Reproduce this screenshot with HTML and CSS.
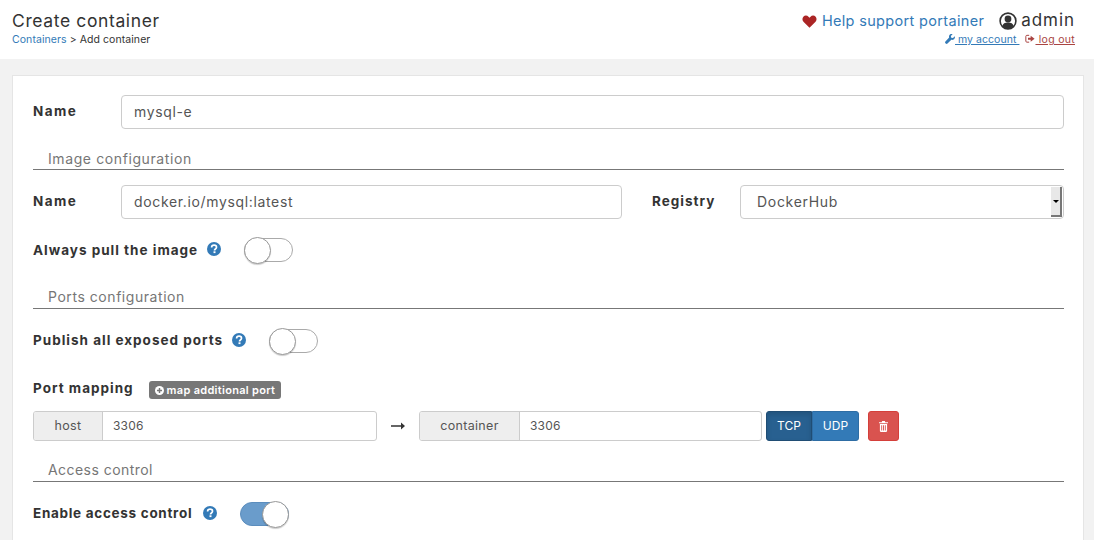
FILE: index.html
```html
<!DOCTYPE html>
<html lang="en">
<head>
<meta charset="utf-8">
<title>Create container</title>
<link rel="stylesheet" href="styles.css">
</head>
<body>
<header class="topbar">
  <div class="crumbs">
    <div class="title">Create container</div>
    <div class="path"><a class="blue">Containers</a> &gt; Add container</div>
  </div>
  <div class="account">
    <div class="account-main">
      <svg class="ic-heart" viewBox="0 0 24 22"><path d="M12 21.5 2.2 11.7C-.6 8.9-.5 5 1.6 2.8 4 .4 8 .5 10.3 2.8L12 4.5l1.7-1.700C16 .5 20 .4 22.4 2.8c2.1 2.2 2.2 6.1-.6 8.900z"/></svg>
      <a class="support">Help support portainer</a>
      <svg class="ic-user" viewBox="0 0 18 18"><circle cx="9" cy="9" r="7.900" fill="#fff" stroke="#333" stroke-width="1.600"/><circle cx="9" cy="7" r="3.400" fill="#333"/><path d="M3.400 14.200c.5-2.600 2.500-3.700 5.600-3.700s5.100 1.100 5.600 3.700A7.500 7.500 0 0 1 9 16.600a7.500 7.500 0 0 1-5.600-2.400z" fill="#333"/></svg>
      <span class="admin">admin</span>
    </div>
    <div class="account-links">
      <a class="link-blue"><svg class="ic-small" viewBox="0 0 12 12"><path fill="#337ab7" d="M11.700 2.800 9.600 4.900 7.500 4.400 7 2.300 9.100.3C7.600-.3 5.900.3 5.200 1.600c-.5.900-.5 1.900-.2 2.700L.5 8.900c-.6.600-.6 1.500 0 2.100l.400.400c.6.600 1.500.6 2.100 0l4.600-4.500c.8.300 1.800.3 2.700-.2 1.300-.8 2-2.400 1.400-3.900z"/></svg> my account&nbsp;</a>
      <a class="link-red"><svg class="ic-small" viewBox="0 0 12 12"><path fill="none" stroke="#a94442" stroke-width="1.200" d="M5 1.600H2.200C1.500 1.600 1 2.100 1 2.800v5.800c0 .7.500 1.200 1.200 1.200H5"/><path fill="#a94442" d="M3.600 4.400h3.200V2.200L11.500 5.700 6.800 9.200V7H3.600z"/></svg> log out</a>
    </div>
  </div>
</header>

<main class="page">
  <section class="card">
    <div class="row">
      <label class="label label-name">Name</label>
      <div class="input grow">mysql-e</div>
    </div>

    <div class="section section-image">Image configuration</div>
    <div class="row row-image">
      <label class="label label-name">Name</label>
      <div class="input image-input">docker.io/mysql:latest</div>
      <label class="label label-registry">Registry</label>
      <div class="select">
        <span class="select-value">DockerHub</span>
        <span class="select-btn"><i class="caret"></i></span>
      </div>
    </div>

    <div class="row row-toggle row-pull">
      <label class="label">Always pull the image</label>
      <svg class="ic-help" viewBox="0 0 14 14"><circle cx="7" cy="7" r="7" fill="#337ab7"/><path d="M4.600 5.400c0-1.400 1-2.200 2.500-2.200 1.400 0 2.400.8 2.400 2 0 1.800-2 1.700-2 3.200" fill="none" stroke="#fff" stroke-width="1.700"/><rect x="6.500" y="9.300" width="2" height="1.800" fill="#fff"/></svg>
      <span class="toggle"><span class="knob"></span></span>
    </div>

    <div class="section section-ports">Ports configuration</div>
    <div class="row row-toggle row-publish">
      <label class="label">Publish all exposed ports</label>
      <svg class="ic-help" viewBox="0 0 14 14"><circle cx="7" cy="7" r="7" fill="#337ab7"/><path d="M4.600 5.400c0-1.400 1-2.200 2.500-2.200 1.400 0 2.400.8 2.400 2 0 1.800-2 1.700-2 3.200" fill="none" stroke="#fff" stroke-width="1.700"/><rect x="6.500" y="9.300" width="2" height="1.800" fill="#fff"/></svg>
      <span class="toggle"><span class="knob"></span></span>
    </div>

    <div class="row row-mapping">
      <label class="label">Port mapping</label>
      <span class="badge"><svg class="ic-plus" viewBox="0 0 10 10"><circle cx="5" cy="5" r="5" fill="#fff"/><path d="M5 2.200v5.600M2.200 5h5.600" stroke="#777" stroke-width="1.600"/></svg>map additional port</span>
    </div>

    <div class="row row-ports">
      <div class="group group-host">
        <span class="addon addon-host">host</span>
        <span class="group-input">3306</span>
      </div>
      <svg class="ic-arrow" viewBox="0 0 14 8"><path d="M0 3.200h10V.5L14 4l-4 3.500V4.800H0z" fill="#333"/></svg>
      <div class="group group-container">
        <span class="addon addon-container">container</span>
        <span class="group-input">3306</span>
      </div>
      <div class="switch">
        <span class="sw sw-on">TCP</span>
        <span class="sw">UDP</span>
      </div>
      <span class="btn-danger"><svg class="ic-trash" viewBox="0 0 10 12"><path fill="#fff" d="M3.500 0h3l.5 1.300H10v1.100H0V1.300h3zM1 3.200h8v7.600c0 .7-.4 1.200-1 1.200H2c-.6 0-1-.5-1-1.200zm1.500 1.300v6h1v-6zm2 0v6h1v-6zm2 0v6h1v-6z"/></svg></span>
    </div>

    <div class="section section-access">Access control</div>
    <div class="row row-toggle row-access">
      <label class="label">Enable access control</label>
      <svg class="ic-help" viewBox="0 0 14 14"><circle cx="7" cy="7" r="7" fill="#337ab7"/><path d="M4.600 5.400c0-1.400 1-2.200 2.500-2.200 1.400 0 2.400.8 2.400 2 0 1.800-2 1.700-2 3.200" fill="none" stroke="#fff" stroke-width="1.700"/><rect x="6.500" y="9.300" width="2" height="1.800" fill="#fff"/></svg>
      <span class="toggle toggle-on"><span class="knob"></span></span>
    </div>
  </section>
</main>
</body>
</html>
```
FILE: styles.css
```css
* { box-sizing: border-box; }
html, body { margin: 0; height: 540px; overflow: hidden; }
body {
  background: #f2f2f2;
  color: #333;
  font-family: Inter, "Liberation Sans", sans-serif;
  font-size: 14px;
}
a { text-decoration: none; }
.blue { color: #337ab7; }

.topbar {
  height: 59px;
  background: #fff;
  display: flex;
  justify-content: space-between;
  padding: 0 19px 0 12px;
}
.title { font-size: 17.500px; line-height: 20px; margin-top: 11px; letter-spacing: .62px; color: #333; }
.path { font-size: 10.500px; line-height: 13px; margin-top: 2px; color: #333; letter-spacing: .07px; }
.account { display: flex; flex-direction: column; align-items: flex-end; }
.account-main { display: flex; align-items: center; margin-top: 11px; height: 20px; }
.ic-heart { width: 15px; height: 13px; fill: #ab2525; margin-right: 5px; }
.support { color: #337ab7; font-size: 14.500px; letter-spacing: .33px; padding-bottom: 2px; }
.ic-user { width: 18px; height: 18px; margin-left: 15px; margin-right: 4px; }
.admin { font-size: 17px; letter-spacing: .95px; color: #333; padding-bottom: 2px; }
.account-links { display: flex; gap: 6px; font-size: 10.500px; line-height: 13px; margin-top: 2px; letter-spacing: .3px; }
.link-blue { color: #337ab7; text-decoration: underline; letter-spacing: .05px; }
.link-red { color: #a94442; text-decoration: underline; }
.ic-small { width: 10px; height: 10px; vertical-align: -1px; }

.page { padding: 16px 10px 0 12px; }
.card {
  background: #fff;
  border: 1px solid #e5e5e5;
  border-bottom: 0;
  height: 465px;
  padding: 19px 19px 0 20px;
}
.row { display: flex; align-items: center; }
.label { font-weight: 700; font-size: 13.500px; letter-spacing: 1px; color: #333; white-space: nowrap; padding-bottom: 2px; }
.label-name { width: 88px; flex: none; letter-spacing: 1.400px; }
.row-pull .label { padding-bottom: 0; }
.row-access .label { letter-spacing: .7px; }
.input {
  height: 34px;
  border: 1px solid #ccc;
  border-radius: 4px;
  padding: 0 12px 2px;
  display: flex;
  align-items: center;
  color: #555;
  font-size: 14px;
  letter-spacing: .65px;
}
.grow { flex: 1; }
.section {
  color: #767676;
  font-size: 14px;
  letter-spacing: .6px;
  line-height: 20px;
  padding-left: 15px;
  border-bottom: 1px solid #777;
  height: 21px;
}
.section-image { margin-top: 20px; }
.section-ports { margin-top: 23px; line-height: 18px; letter-spacing: .55px; }
.section-access { margin-top: 20px; line-height: 18px; letter-spacing: .45px; }
.row-image { margin-top: 15px; }
.image-input { width: 501px; flex: none; }
.label-registry { margin-left: 30px; width: 88px; flex: none; }
.select {
  flex: 1;
  height: 34px;
  border: 1px solid #ccc;
  border-radius: 4px;
  display: flex;
  align-items: stretch;
  justify-content: space-between;
  padding: 1px;
  color: #555;
  font-size: 14px;
  letter-spacing: .7px;
}
.select-value { padding: 0 0 2px 15px; align-self: center; }
.select-btn {
  width: 11px;
  background: #e8e8e8;
  border-right: 2px solid #777;
  border-bottom: 2px solid #777;
  display: flex;
  align-items: center;
  justify-content: center;
}
.caret { border-left: 3px solid transparent; border-right: 3px solid transparent; border-top: 3px solid #000; }

.row-toggle { height: 30px; }
.row-pull { margin-top: 16px; }
.row-publish { margin-top: 17px; }
.row-access { margin-top: 17px; }
.ic-help { width: 14px; height: 14px; margin-left: 9px; flex: none; margin-bottom: 2px; }
.row-access .ic-help { margin-left: 11px; }
.toggle {
  display: block;
  position: relative;
  width: 49px;
  height: 24px;
  border: 1px solid #aaa;
  border-radius: 12px;
  background: #fff;
  margin-left: 23px;
  flex: none;
}
.knob {
  position: absolute;
  left: -1px;
  top: -2px;
  width: 27px;
  height: 27px;
  border-radius: 50%;
  background: #fff;
  border: 1px solid #999;
  box-shadow: 0 1px 1px rgba(0,0,0,.2);
}
.toggle-on { background: #6a9ccb; border-color: #5b8dbd; }
.toggle-on .knob { left: auto; right: -1px; }

.row-mapping { margin-top: 23px; height: 20px; }
.badge {
  display: inline-flex;
  align-items: center;
  background: #777;
  color: #fff;
  font-size: 11px;
  font-weight: 600;
  height: 18px;
  border-radius: 3px;
  padding: 0 6px 1px;
  margin: 2px 0 0 15px;
  letter-spacing: .3px;
}
.ic-plus { width: 9px; height: 9px; margin: 1px 3px 0 0; }

.row-ports { margin-top: 12px; }
.group {
  display: flex;
  height: 30px;
  border: 1px solid #ccc;
  border-radius: 3px;
  font-size: 12.500px;
  color: #555;
  overflow: hidden;
  flex: none;
}
.group-host { width: 344px; }
.group-container { width: 343px; }
.addon {
  background: #eee;
  border-right: 1px solid #ccc;
  display: flex;
  align-items: center;
  justify-content: center;
  flex: none;
  padding-bottom: 2px;
  letter-spacing: .3px;
}
.addon-host { width: 69px; }
.addon-container { width: 100px; }
.group-input { display: flex; align-items: center; padding: 0 0 2px 10px; font-size: 12px; letter-spacing: .2px; }
.ic-arrow { width: 14px; height: 8px; margin: 0 14px; flex: none; }
.switch { display: flex; height: 30px; margin-left: 4px; flex: none; }
.sw {
  width: 47px;
  display: flex;
  align-items: center;
  justify-content: center;
  background: #337ab7;
  border: 1px solid #2e6da4;
  color: #fff;
  font-size: 12px;
  border-radius: 0 3px 3px 0;
  padding-bottom: 2px;
}
.sw-on {
  width: 46px;
  background: #286090;
  border-color: #204d74;
  border-radius: 3px 0 0 3px;
  box-shadow: inset 0 3px 5px rgba(0,0,0,.125);
}
.btn-danger {
  width: 31px;
  height: 30px;
  margin-left: 9px;
  background: #d9534f;
  border: 1px solid #d43f3a;
  border-radius: 3px;
  display: flex;
  align-items: center;
  justify-content: center;
  flex: none;
}
.ic-trash { width: 9px; height: 11px; }
```
